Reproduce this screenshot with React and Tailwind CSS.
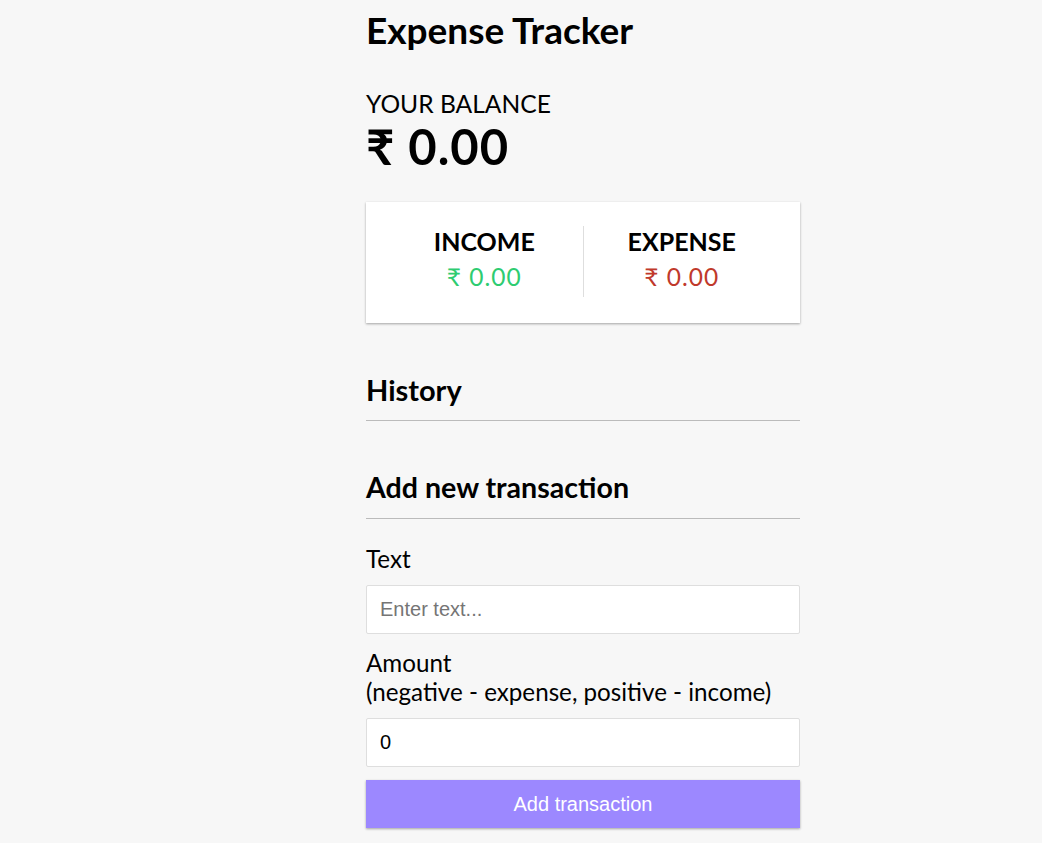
import React from 'react';

const shadow = 'shadow-[0_1px_3px_rgba(0,0,0,0.12),0_1px_2px_rgba(0,0,0,0.24)]';

const App = () => {
  return (
    <div className="min-h-screen bg-[#f7f7f7] font-['Lato','Noto_Sans',sans-serif] text-black">
      <div className="ml-[366px] w-[434px] pt-[7px] pb-[15px]">
        {/* Header */}
        <h2 className="text-[37px] leading-[46px] font-bold">Expense Tracker</h2>

        <h4 className="mt-[37px] text-[24.6px] leading-[28px] uppercase">Your Balance</h4>
        <h1 className="text-[49px] leading-[56px] font-bold tracking-[1px]">₹ 0.00</h1>

        {/* Income / expense card */}
        <div className={`mt-[28px] flex bg-white pt-[24px] pb-[26px] px-[20px] ${shadow}`}>
          <div className="flex-1 text-center border-r border-[#dedede]">
            <h4 className="text-[25px] leading-[31px] font-bold uppercase">Income</h4>
            <p className="mt-[5px] mb-[5px] text-[24.5px] leading-[30px] tracking-[1px] text-[#2ecc71]">₹ 0.00</p>
          </div>
          <div className="flex-1 text-center">
            <h4 className="text-[25px] leading-[31px] font-bold uppercase">Expense</h4>
            <p className="mt-[5px] mb-[5px] text-[24.5px] leading-[30px] tracking-[1px] text-[#c0392b]">₹ 0.00</p>
          </div>
        </div>

        {/* History */}
        <h3 className="mt-[49px] pb-[12px] border-b border-[#bbb] text-[29px] leading-[36px] font-bold">History</h3>
        <ul></ul>

        {/* Form */}
        <h3 className="mt-[48px] pb-[13px] border-b border-[#bbb] text-[28.6px] leading-[36px] font-bold">Add new transaction</h3>
        <form onSubmit={(e) => e.preventDefault()}>
          <label className="block mt-[25px] text-[24.2px] leading-[29px]">Text</label>
          <input
            type="text"
            placeholder="Enter text..."
            className="mt-[12px] block w-full h-[49px] px-[13px] bg-white border border-[#dedede] rounded-[2px] text-[20px] font-['Liberation_Sans',Arial,sans-serif] placeholder:text-[#757575] outline-none"
          />
          <label className="block mt-[14px] text-[24.2px] leading-[29px]">
            Amount <br />
            (negative - expense, positive - income)
          </label>
          <input
            type="number"
            defaultValue="0"
            className="mt-[12px] block w-full h-[49px] px-[13px] bg-white border border-[#dedede] rounded-[2px] text-[20px] font-['Liberation_Sans',Arial,sans-serif] outline-none"
          />
          <button
            type="submit"
            className={`mt-[13px] block w-full h-[48px] bg-[#9c88ff] text-white text-[20px] font-['Liberation_Sans',Arial,sans-serif] ${shadow}`}
          >
            Add transaction
          </button>
        </form>
      </div>
    </div>
  );
};

export default App;
